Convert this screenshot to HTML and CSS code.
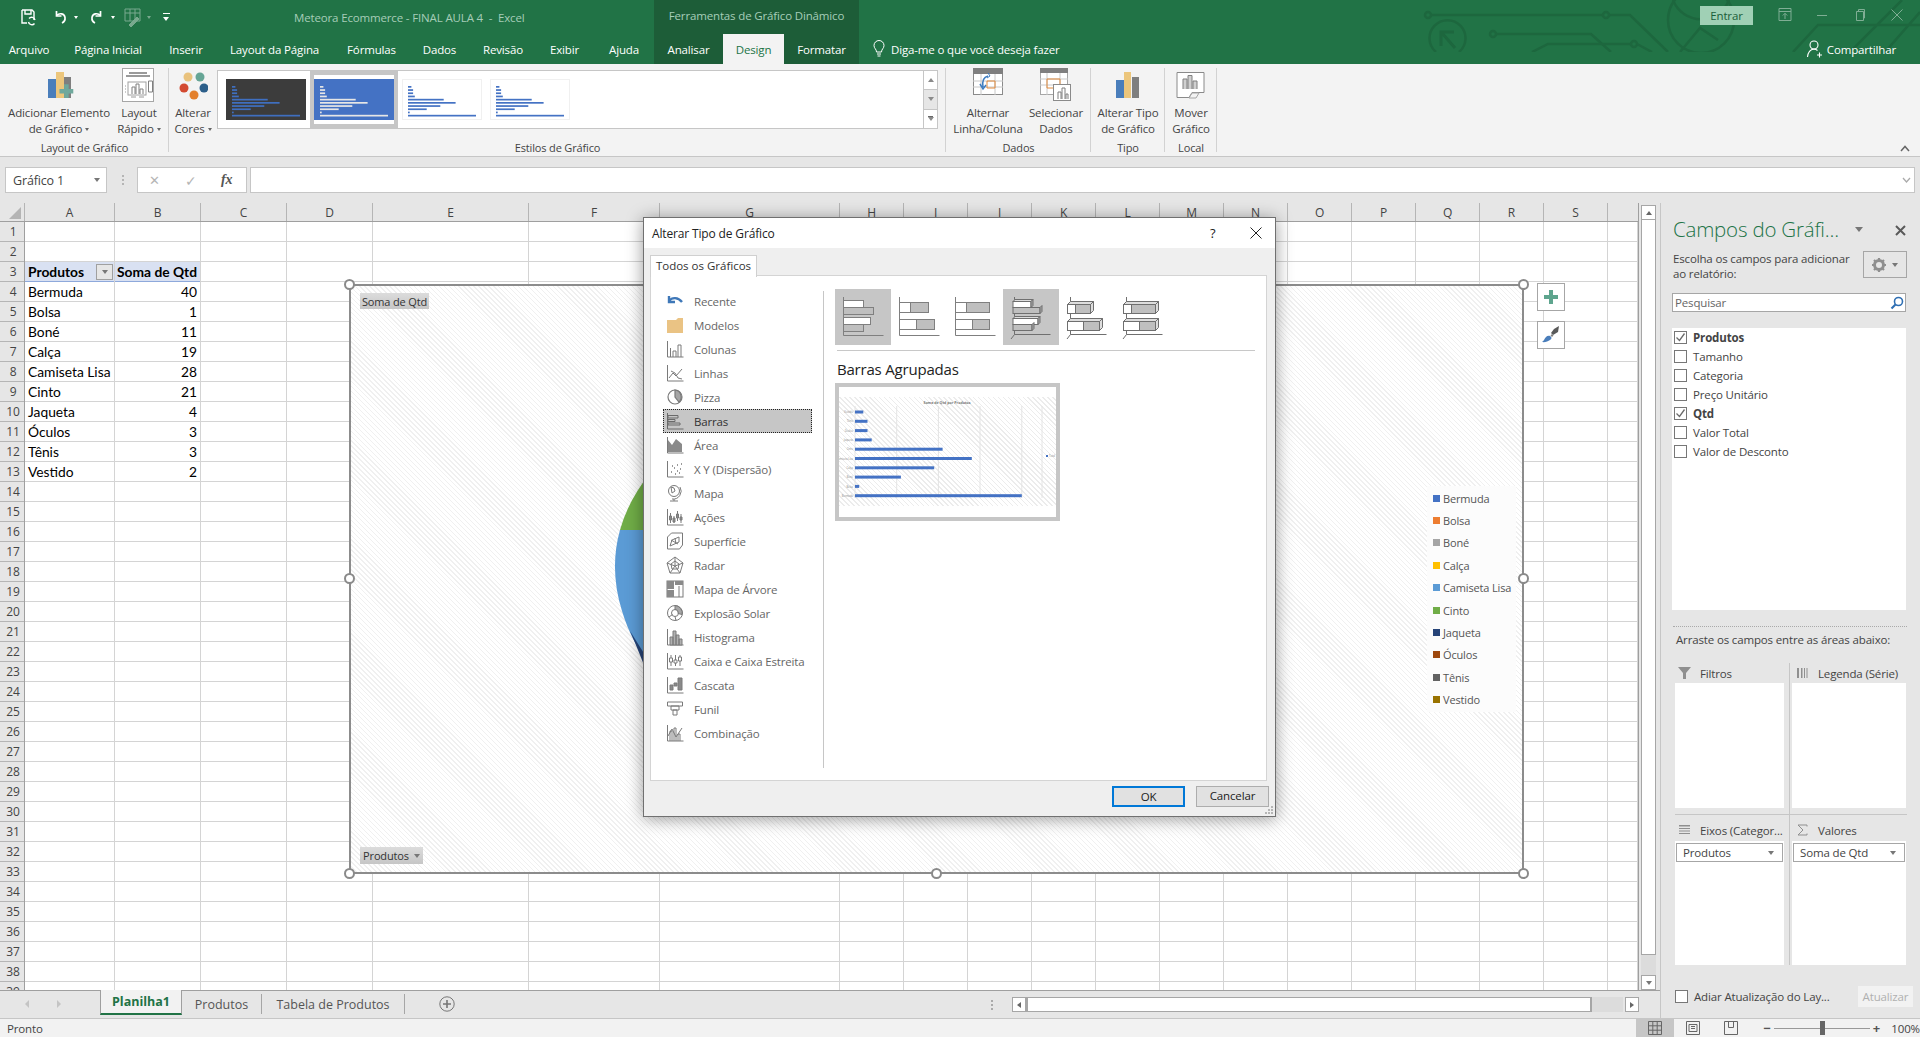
FILE: index.html
```html
<!DOCTYPE html>
<html lang="pt-BR">
<head>
<meta charset="utf-8">
<title>Meteora Ecommerce - FINAL AULA 4 - Excel</title>
<link rel="stylesheet" href="styles.css">
</head>
<body>
<svg class="defs" width="0" height="0">
  <symbol id="thumb-bars" viewBox="0 0 80 41">
    <g fill="currentColor">
      <rect x="6" y="7" width="3.4" height="1.7"/><rect x="6" y="10.2" width="5.1" height="1.7"/><rect x="6" y="13.4" width="5.1" height="1.7"/><rect x="6" y="16.6" width="6.8" height="1.7"/><rect x="6" y="19.8" width="35.7" height="1.7"/><rect x="6" y="23" width="47.6" height="1.7"/><rect x="6" y="26.2" width="32.3" height="1.7"/><rect x="6" y="29.4" width="18.7" height="1.7"/><rect x="6" y="32.6" width="1.7" height="1.7"/><rect x="6" y="35.8" width="68" height="1.7"/>
    </g>
  </symbol>
  <symbol id="gridlet" viewBox="0 0 16 16"><path d="M1.5 1v14h14" fill="none" stroke="#7f7f7f"/></symbol>
</svg>
<div class="app">
  <header class="head">
    <svg class="circuit" width="500" height="52" viewBox="1420 0 500 52" fill="none" stroke="#1d673e" stroke-width="2.5">
      <circle cx="1428" cy="15" r="3"/><path d="M1431 15H1603M1609 15H1630L1668 52"/><circle cx="1606" cy="15" r="3"/>
      <path d="M1436 52A18 18 0 1 1 1459 52"/><path d="M1441 46V32H1454M1442 33L1455 48" stroke-width="3"/>
      <circle cx="1493" cy="34" r="3"/><path d="M1496 34H1591L1611 52"/>
      <path d="M1532 52L1548 44H1631"/><circle cx="1634" cy="44" r="3"/><path d="M1637 44L1652 52"/>
      <path d="M1673 0A30 30 0 0 0 1729 0M1680 52L1700 28L1718 40"/><circle cx="1701" cy="20" r="33"/>
      <path d="M1793 52L1818 25H1920M1850 52L1902 0M1885 52L1920 12"/>
    </svg>
    <div class="title-row">
      <div class="qat">
        <svg class="qat-save" width="18" height="18" viewBox="0 0 18 18" fill="none" stroke="#fff" stroke-width="1.4"><path d="M3 2h10l2 2v8M3 2v13h5"/><path d="M6 2v4h6V2"/><path d="M16 12a3.4 3.4 0 0 0-6-1.5M9.500 14a3.400 3.400 0 0 0 6 1.500"/></svg>
        <svg class="qat-undo" width="16" height="16" viewBox="0 0 16 16" fill="none" stroke="#fff" stroke-width="1.7"><path d="M4.500 2v5h5"/><path d="M4.500 6.500c3-3 8-2 8.500 2 .3 2.500-1 4.500-3 5.500"/></svg>
        <span class="qat-arrow"></span>
        <svg class="qat-redo" width="16" height="16" viewBox="0 0 16 16" fill="none" stroke="#fff" stroke-width="1.7"><path d="M11.500 2v5h-5"/><path d="M11.500 6.500c-3-3-8-2-8.500 2-.3 2.500 1 4.500 3 5.500"/></svg>
        <span class="qat-arrow"></span>
        <svg class="qat-form" width="20" height="20" viewBox="0 0 20 20" fill="none" stroke="#79a98e"><path d="M2 2h15v12H2zM2 6h15M7 2v12M12 2v12"/><path d="M6 18l8-8 2 2-8 8z" fill="#79a98e"/></svg>
        <span class="qat-arrow qat-arrow-dim"></span>
        <span class="qat-custom"></span>
      </div>
      <div class="doc-title">Meteora Ecommerce - FINAL AULA 4&nbsp; -&nbsp; Excel</div>
      <div class="context-title">Ferramentas de Gráfico Dinâmico</div>
      <div class="title-fill"></div>
      <div class="signin">Entrar</div>
      <div class="win-btns">
        <svg width="14" height="14" viewBox="0 0 14 14" fill="none" stroke="#7fae94"><path d="M1 .500h12v12H1zM1 3.500h12M7 11V5.500M4.800 7.500L7 5.300l2.200 2.200"/></svg>
        <svg width="14" height="14" viewBox="0 0 14 14" fill="none" stroke="#7fae94"><path d="M2 7.500h10"/></svg>
        <svg width="14" height="14" viewBox="0 0 14 14" fill="none" stroke="#7fae94"><path d="M3.500 3.500h7v9h-7zM5.500 3.500V1.500h6v8.500h-1"/></svg>
        <svg width="14" height="14" viewBox="0 0 14 14" fill="none" stroke="#7fae94"><path d="M1.500 1.500l11 11M12.500 1.500l-11 11"/></svg>
      </div>
    </div>
    <nav class="tab-row">
      <div class="tab tab-arquivo">Arquivo</div>
      <div class="tab tab-inicial">Página Inicial</div>
      <div class="tab tab-inserir">Inserir</div>
      <div class="tab tab-layout">Layout da Página</div>
      <div class="tab tab-formulas">Fórmulas</div>
      <div class="tab tab-dados">Dados</div>
      <div class="tab tab-revisao">Revisão</div>
      <div class="tab tab-exibir">Exibir</div>
      <div class="tab tab-ajuda">Ajuda</div>
      <div class="context-tabs">
        <div class="tab tab-analisar">Analisar</div>
        <div class="tab tab-design">Design</div>
        <div class="tab tab-formatar">Formatar</div>
      </div>
      <div class="tell-me">
        <svg width="12" height="18" viewBox="0 0 12 18" fill="none" stroke="#fff"><path d="M3.500 12c0-3-2.500-3.500-2.500-6.500a5 5 0 0 1 10 0C11 8.500 8.500 9 8.500 12zM4 14h4M4.500 16h3"/></svg>
        <span>Diga-me o que você deseja fazer</span>
      </div>
      <div class="share">
        <svg width="18" height="18" viewBox="0 0 18 18" fill="none" stroke="#fff" stroke-width="1.1"><circle cx="8" cy="5" r="4"/><path d="M1.500 17c.5-5 3-7.500 6.500-8 1.500.2 2.600.7 3.500 1.500M13.500 12.500v5M11 15h5"/></svg>
        <span>Compartilhar</span>
      </div>
    </nav>
  </header>

  <section class="ribbon">
    <div class="rgroup rgroup-layout">
      <div class="rgroup-body">
        <div class="rbtn rbtn-add">
          <svg class="ricon" width="32" height="36" viewBox="0 0 32 36"><rect x="5" y="11" width="8" height="19" fill="#4a7ebb"/><rect x="13" y="4" width="8" height="26" fill="#ecc67c"/><rect x="21" y="9" width="7" height="21" fill="#7f7f7f"/><path d="M24 21h5v5h5v5h-5v5h-5v-5h-5v-5h5z" transform="translate(-1 -3) scale(.92)" fill="#6fa89c"/></svg>
          <div class="rtext">Adicionar Elemento<br>de Gráfico<i class="caret"></i></div>
        </div>
        <div class="rbtn rbtn-quick">
          <svg class="ricon" width="34" height="36" viewBox="0 0 34 36" fill="none"><rect x=".5" y=".500" width="31" height="33" fill="#fff" stroke="#a6a6a6"/><path d="M7 5h18M4 8h24" stroke="#9a9a9a" stroke-width="2"/><rect x="6" y="14" width="18" height="13" stroke="#a0a0a0"/><path d="M10 26V19h3v7M14 26V16h3v10M18 26V21h3v5" stroke="#7f7f7f"/><path d="M26.500 13h4v11h-4z" stroke="#7f7f7f"/><path d="M9 29h5M17 29h5" stroke="#999"/><path d="M3 18h1M3 21h1M3 24h1" stroke="#999"/></svg>
          <div class="rtext">Layout<br>Rápido<i class="caret"></i></div>
        </div>
      </div>
      <div class="rgroup-label">Layout de Gráfico</div>
    </div>
    <div class="rgroup rgroup-styles">
      <div class="rgroup-body">
        <div class="rbtn rbtn-colors">
          <svg class="ricon" width="30" height="36" viewBox="0 0 30 36"><circle cx="10" cy="9" r="4.500" fill="#e9c27d"/><circle cx="22" cy="9" r="4.500" fill="#66a595"/><circle cx="6" cy="20" r="4.500" fill="#d34a30"/><circle cx="26" cy="20" r="4.500" fill="#2c5f8a"/><circle cx="16" cy="27" r="4.500" fill="#e37f2b"/></svg>
          <div class="rtext">Alterar<br>Cores<i class="caret"></i></div>
        </div>
        <div class="gallery">
          <div class="gal-item gal-dark"><svg width="80" height="41"><use href="#thumb-bars"/></svg></div>
          <div class="gal-item gal-blue"><svg width="80" height="41"><use href="#thumb-bars"/></svg></div>
          <div class="gal-item gal-plain"><svg width="80" height="41"><use href="#thumb-bars"/></svg></div>
          <div class="gal-item gal-plain"><svg width="80" height="41"><use href="#thumb-bars"/></svg></div>
          <div class="gal-scroll">
            <div class="gal-btn"><i class="tri-up"></i></div>
            <div class="gal-btn gal-btn-mid"><i class="tri-down"></i></div>
            <div class="gal-btn gal-btn-more"><i class="tri-down"></i></div>
          </div>
        </div>
      </div>
      <div class="rgroup-label">Estilos de Gráfico</div>
    </div>
    <div class="rgroup rgroup-data">
      <div class="rgroup-body">
        <div class="rbtn rbtn-switch">
          <svg class="ricon" width="30" height="36" viewBox="0 0 30 36" fill="none"><rect x=".5" y=".500" width="29" height="26" fill="#fff" stroke="#8a8a8a"/><rect x="0" y="0" width="30" height="6" fill="#7f7f7f"/><path d="M0 13h30M0 19h30M8 6v21M22 6v21" stroke="#c8c8c8"/><path d="M14 13h8v7h-8z" stroke="#e08a3c"/><path d="M15 8c-4 1-6 5-5 11M7 16l3 5 3-4" stroke="#3d7cc0" stroke-width="1.500"/><path d="M14 10l3-2-2-3" stroke="#3d7cc0"/></svg>
          <div class="rtext">Alternar<br>Linha/Coluna</div>
        </div>
        <div class="rbtn rbtn-select">
          <svg class="ricon" width="32" height="36" viewBox="0 0 32 36" fill="none"><rect x=".5" y=".500" width="27" height="26" fill="#fff" stroke="#a6a6a6"/><rect x="0" y="0" width="28" height="5" fill="#7f7f7f"/><path d="M0 11h28M0 17h28M7 5v22M20 5v22" stroke="#c8c8c8"/><path d="M7 11h13v9H7z" stroke="#e08a3c"/><rect x="13.500" y="16.500" width="17" height="16" fill="#fff" stroke="#8a8a8a"/><path d="M18 31V24h3v7M22 31V20h3v11M26 31V26h2v5" stroke="#7f7f7f"/></svg>
          <div class="rtext">Selecionar<br>Dados</div>
        </div>
      </div>
      <div class="rgroup-label">Dados</div>
    </div>
    <div class="rgroup rgroup-type">
      <div class="rgroup-body">
        <div class="rbtn rbtn-type">
          <svg class="ricon" width="24" height="36" viewBox="0 0 24 36"><rect x="0" y="12" width="8" height="18" fill="#4a7ebb"/><rect x="8" y="4" width="7" height="26" fill="#ecc67c"/><rect x="16" y="9" width="7" height="21" fill="#7f7f7f"/></svg>
          <div class="rtext">Alterar Tipo<br>de Gráfico</div>
        </div>
      </div>
      <div class="rgroup-label">Tipo</div>
    </div>
    <div class="rgroup rgroup-local">
      <div class="rgroup-body">
        <div class="rbtn rbtn-move">
          <svg class="ricon" width="30" height="36" viewBox="0 0 30 36" fill="none"><path d="M1 4.500h27v20H16l-3 5H1z" fill="#fff" stroke="#8a8a8a"/><path d="M7 21V11h4v10M12 21V7.500h4V21M17 21V13h4v8" fill="#d0d0d0" stroke="#7f7f7f"/><path d="M13 30l3-5h7l-3 5z" stroke="#a6a6a6"/></svg>
          <div class="rtext">Mover<br>Gráfico</div>
        </div>
      </div>
      <div class="rgroup-label">Local</div>
    </div>
    <div class="ribbon-collapse"><svg width="10" height="7" viewBox="0 0 10 7" fill="none" stroke="#666" stroke-width="1.500"><path d="M1 6l4-4.500L9 6"/></svg></div>
  </section>

  <section class="formula-bar">
    <div class="name-box"><span>Gráfico 1</span><i class="tri-down tri-dark"></i></div>
    <div class="fb-dots"></div>
    <div class="fb-tools">
      <span class="fb-x">✕</span><span class="fb-ok">✓</span><span class="fb-fx">fx</span>
    </div>
    <div class="fb-input"><svg width="9" height="6" viewBox="0 0 9 6" fill="none" stroke="#aaa" stroke-width="1.300"><path d="M1 1l3.500 4L8 1"/></svg></div>
  </section>

  <main class="work">
    <div class="work-left">
      <div class="sheet-row">
        <div class="sheet">
          <div class="col-heads">
            <div class="corner"><i></i></div>
            <div class="ch c-a">A</div><div class="ch c-b">B</div><div class="ch c-c">C</div><div class="ch c-c">D</div><div class="ch c-e">E</div><div class="ch c-f">F</div><div class="ch c-g">G</div><div class="ch c-n">H</div><div class="ch c-n">I</div><div class="ch c-n">J</div><div class="ch c-n">K</div><div class="ch c-n">L</div><div class="ch c-n">M</div><div class="ch c-n">N</div><div class="ch c-n">O</div><div class="ch c-n">P</div><div class="ch c-n">Q</div><div class="ch c-n">R</div><div class="ch c-n">S</div><div class="ch c-t"></div>
          </div>
          <div class="sheet-body">
            <div class="row-heads">
              <div>1</div><div>2</div><div>3</div><div>4</div><div>5</div><div>6</div><div>7</div><div>8</div><div>9</div><div>10</div><div>11</div><div>12</div><div>13</div><div>14</div><div>15</div><div>16</div><div>17</div><div>18</div><div>19</div><div>20</div><div>21</div><div>22</div><div>23</div><div>24</div><div>25</div><div>26</div><div>27</div><div>28</div><div>29</div><div>30</div><div>31</div><div>32</div><div>33</div><div>34</div><div>35</div><div>36</div><div>37</div><div>38</div><div>39</div>
            </div>
            <div class="col c-a">
              <div class="cell"></div><div class="cell"></div>
              <div class="cell cell-head">Produtos<i class="filter-btn"><b class="tri-down tri-dark"></b></i></div>
              <div class="cell">Bermuda</div><div class="cell">Bolsa</div><div class="cell">Boné</div><div class="cell">Calça</div><div class="cell">Camiseta Lisa</div><div class="cell">Cinto</div><div class="cell">Jaqueta</div><div class="cell">Óculos</div><div class="cell">Tênis</div><div class="cell">Vestido</div>
            </div>
            <div class="col c-b">
              <div class="cell"></div><div class="cell"></div>
              <div class="cell cell-head cell-head-b">Soma de Qtd</div>
              <div class="cell num">40</div><div class="cell num">1</div><div class="cell num">11</div><div class="cell num">19</div><div class="cell num">28</div><div class="cell num">21</div><div class="cell num">4</div><div class="cell num">3</div><div class="cell num">3</div><div class="cell num">2</div>
            </div>
            <div class="col c-c"></div><div class="col c-c"></div><div class="col c-e"></div><div class="col c-f"></div><div class="col c-g"></div>
            <div class="col c-n"></div><div class="col c-n"></div><div class="col c-n"></div><div class="col c-n"></div><div class="col c-n"></div><div class="col c-n"></div><div class="col c-n"></div><div class="col c-n"></div><div class="col c-n"></div><div class="col c-n"></div><div class="col c-n"></div><div class="col c-n"></div>
            <div class="col c-t"></div>
          </div>

          <div class="chart">
            <svg class="pie" width="60" height="220" viewBox="610 470 60 220">
              <path d="M620 531Q628 502 650 474V531Z" fill="#70ad47"/>
              <path d="M620 531Q609 570 622 612Q632 645 650 664V531Z" fill="#5b9bd5"/>
              <path d="M630 632Q640 655 650 682V664Z" fill="#264478"/>
            </svg>
            <div class="chart-btn chart-btn-value">Soma de Qtd</div>
            <div class="chart-btn chart-btn-axis">Produtos<i class="tri-down tri-dark"></i></div>
            <ul class="legend">
              <li><i class="sw sw1"></i>Bermuda</li><li><i class="sw sw2"></i>Bolsa</li><li><i class="sw sw3"></i>Boné</li><li><i class="sw sw4"></i>Calça</li><li><i class="sw sw5"></i>Camiseta Lisa</li><li><i class="sw sw6"></i>Cinto</li><li><i class="sw sw7"></i>Jaqueta</li><li><i class="sw sw8"></i>Óculos</li><li><i class="sw sw9"></i>Tênis</li><li><i class="sw sw10"></i>Vestido</li>
            </ul>
            <i class="handle h-tl"></i><i class="handle h-tr"></i><i class="handle h-ml"></i><i class="handle h-mr"></i><i class="handle h-bl"></i><i class="handle h-bm"></i><i class="handle h-br"></i>
          </div>
          <div class="chart-tool chart-tool-plus"><svg width="16" height="16" viewBox="0 0 16 16"><path d="M6 1h4v5h5v4h-5v5H6v-5H1V6h5z" fill="#5ea58e"/></svg></div>
          <div class="chart-tool chart-tool-brush"><svg width="20" height="20" viewBox="0 0 20 20"><path d="M18 1l-1 6-5 3-2-2 3-4z" fill="#595959"/><path d="M11 9l1.500 1.500-1.500 1.500-1.500-1.500z" fill="#7f7f7f"/><path d="M9 11c2 1 2 3 0 4-2 1.500-5 2.500-8 2 2-1 2-3 4-5 1-1 2.500-1.500 4-1z" fill="#4a7ebb"/></svg></div>
        </div>
        <div class="vscroll">
          <div class="sb-btn"><i class="tri-up tri-dark"></i></div>
          <div class="sb-thumb"></div>
          <div class="sb-track"></div>
          <div class="sb-btn"><i class="tri-down tri-dark"></i></div>
        </div>
      </div>
      <div class="sheet-tabs">
        <div class="sheet-nav"><svg width="40" height="10" viewBox="0 0 40 10" fill="#c4c4c4"><path d="M5 1L1 5l4 4zM33 1l4 4-4 4z"/></svg></div>
        <div class="stab stab-active">Planilha1</div>
        <div class="stab stab-prod">Produtos</div>
        <div class="stab stab-tab">Tabela de Produtos</div>
        <div class="stab-add"><svg width="16" height="16" viewBox="0 0 16 16" fill="none" stroke="#777"><circle cx="8" cy="8" r="7.200"/><path d="M8 4v8M4 8h8" stroke-width="1.600"/></svg></div>
        <div class="tabs-fill"><span class="tabs-grip"></span></div>
        <div class="hscroll">
          <div class="hsb-btn"><i class="tri-left"></i></div>
          <div class="hsb-thumb"></div>
          <div class="hsb-track"></div>
          <div class="hsb-btn"><i class="tri-right"></i></div>
        </div>
      </div>
    </div>

    <aside class="pane">
      <div class="pane-head">
        <div class="pane-title">Campos do Gráfi...</div>
        <i class="pane-menu"></i>
        <svg class="pane-close" width="11" height="11" viewBox="0 0 11 11" stroke="#595959" stroke-width="2"><path d="M1 1l9 9M10 1l-9 9"/></svg>
      </div>
      <div class="pane-desc">
        <p>Escolha os campos para adicionar<br>ao relatório:</p>
        <div class="gear-box"><svg width="14" height="14" viewBox="0 0 14 14"><path d="M5.500 0h3l.4 2 1.700.7 1.700-1.100 2 2-1.100 1.800.7 1.600 2 .4v3" fill="none"/><circle cx="7" cy="7" r="4.500" fill="none" stroke="#8f8f8f" stroke-width="3"/><path d="M7 0v3M7 11v3M0 7h3M11 7h3M2 2l2 2M10 10l2 2M12 2l-2 2M4 10l-2 2" stroke="#8f8f8f" stroke-width="2.200"/></svg><i class="tri-down tri-dark"></i></div>
      </div>
      <div class="pane-search"><span>Pesquisar</span><svg width="14" height="14" viewBox="0 0 14 14" fill="none" stroke="#2f6fb3" stroke-width="1.600"><circle cx="8.500" cy="5.500" r="4"/><path d="M5.500 8.500L1.500 12.500" stroke-width="2.200"/></svg></div>
      <ul class="field-list">
        <li class="on"><i class="chk"><svg width="11" height="11" viewBox="0 0 11 11" fill="none" stroke="#6b6b6b" stroke-width="1.300"><path d="M1.500 5.500l3 3 5-7"/></svg></i>Produtos</li>
        <li><i class="chk"></i>Tamanho</li>
        <li><i class="chk"></i>Categoria</li>
        <li><i class="chk"></i>Preço Unitário</li>
        <li class="on"><i class="chk"><svg width="11" height="11" viewBox="0 0 11 11" fill="none" stroke="#6b6b6b" stroke-width="1.300"><path d="M1.500 5.500l3 3 5-7"/></svg></i>Qtd</li>
        <li><i class="chk"></i>Valor Total</li>
        <li><i class="chk"></i>Valor de Desconto</li>
      </ul>
      <div class="pane-dots"></div>
      <div class="pane-drag">Arraste os campos entre as áreas abaixo:</div>
      <div class="areas">
        <div class="area area-tl">
          <div class="area-head"><svg width="14" height="12" viewBox="0 0 14 12" fill="#8f8f8f"><path d="M0 0h13L8 6v6H5V6z"/></svg>Filtros</div>
          <div class="area-box"></div>
        </div>
        <div class="area area-tr">
          <div class="area-head"><svg width="14" height="12" viewBox="0 0 14 12" fill="#8f8f8f"><path d="M1 1h2v10H1zM5 1h1.500v10H5zM8 1h1v10H8zM10.500 1h1v10h-1z"/></svg>Legenda (Série)</div>
          <div class="area-box"></div>
        </div>
        <div class="area area-bl">
          <div class="area-head"><svg width="14" height="12" viewBox="0 0 14 12" fill="#8f8f8f"><path d="M1 1h11v1.500H1zM1 4h11v1H1zM1 6.500h11v1H1zM1 9h11v1H1z"/></svg>Eixos (Categor...</div>
          <div class="area-box"><div class="field-pill">Produtos<i class="tri-down tri-dark"></i></div></div>
        </div>
        <div class="area area-br">
          <div class="area-head"><svg width="14" height="12" viewBox="0 0 14 12" fill="none" stroke="#8f8f8f"><path d="M11 2.500V1H2l5 5-5 5h9V9.500"/></svg>Valores</div>
          <div class="area-box"><div class="field-pill">Soma de Qtd<i class="tri-down tri-dark"></i></div></div>
        </div>
      </div>
      <div class="pane-foot">
        <i class="chk"></i><span>Adiar Atualização do Lay...</span>
        <div class="update-btn">Atualizar</div>
      </div>
    </aside>
  </main>

  <footer class="status">
    <span class="status-ready">Pronto</span>
    <div class="status-views">
      <div class="view-btn view-on"><svg width="14" height="14" viewBox="0 0 14 14" fill="none" stroke="#666"><path d="M.5.500h13v13H.5zM.5 4.800h13M.5 9.200h13M4.800.500v13M9.200.500v13"/></svg></div>
      <div class="view-btn"><svg width="14" height="14" viewBox="0 0 14 14" fill="none" stroke="#666"><path d="M.5.500h13v13H.5zM3 3.500h8v7H3zM5 5.500h4M5 7.500h4"/></svg></div>
      <div class="view-btn"><svg width="14" height="14" viewBox="0 0 14 14" fill="none" stroke="#666"><path d="M.5.500h13v13H.5zM4.500.500v6h5v-6"/></svg></div>
    </div>
    <div class="zoom">
      <span class="z-sign">−</span>
      <div class="z-track"><i></i></div>
      <span class="z-sign">+</span>
      <span class="z-val">100%</span>
    </div>
  </footer>

  <div class="dialog">
    <div class="dlg-title"><span>Alterar Tipo de Gráfico</span><b class="dlg-help">?</b><svg class="dlg-x" width="12" height="12" viewBox="0 0 12 12" stroke="#222" fill="none"><path d="M.5.500l11 11M11.500.500l-11 11"/></svg></div>
    <div class="dlg-tabs"><div class="dlg-tab">Todos os Gráficos</div></div>
    <div class="dlg-panel">
      <ul class="types">
        <li class="t-first"><svg viewBox="0 0 18 18" width="18" height="18" fill="none" stroke="#3f78b8" stroke-width="2.400"><path d="M3 4v6h6"/><path d="M3 9c3-4 9-4 13 1"/></svg>Recente</li>
        <li><svg viewBox="0 0 18 18" width="18" height="18"><path d="M1 4h9l2-2h5v15H1z" fill="#eac384"/></svg>Modelos</li>
        <li><svg viewBox="0 0 18 18" width="18" height="18" fill="none" stroke="#7a7a7a"><path d="M1.500 1v16h16M4.500 17V8M7 17V11h3v6M12 17V5h3v12"/></svg>Colunas</li>
        <li><svg viewBox="0 0 18 18" width="18" height="18" fill="none" stroke="#7a7a7a"><path d="M1.500 1v16h16"/><path d="M3 14l4-5 3 3 6-7M5 7l4 2 3 5 4 1"/></svg>Linhas</li>
        <li><svg viewBox="0 0 18 18" width="18" height="18" fill="none" stroke="#7a7a7a" stroke-width="1.200"><circle cx="9" cy="9" r="7"/><path d="M9 2v7l4 5A7 7 0 0 0 9 2z" fill="#a6a6a6"/></svg>Pizza</li>
        <li class="t-sel"><svg viewBox="0 0 18 18" width="18" height="18" fill="none" stroke="#6a6a6a"><path d="M1.500 1v16h16M2 3.500h10v2.500H2zM2 7.500h7v2H2zM2 11h12v2H2z"/></svg>Barras</li>
        <li><svg viewBox="0 0 18 18" width="18" height="18"><path d="M1.500 1v16h16" fill="none" stroke="#7a7a7a"/><path d="M2 4l4 5 4-6 6 5v8H2z" fill="#8a8a8a"/></svg>Área</li>
        <li><svg viewBox="0 0 18 18" width="18" height="18" fill="none" stroke="#7a7a7a"><path d="M1.500 1v16h16"/><path d="M5 12h1M8 8h1M11 5h1M14 9h1M6 6h1M11 11h1M9 14h1M15 4h1M13 13h1" stroke-width="1.600"/></svg>X Y (Dispersão)</li>
        <li><svg viewBox="0 0 18 18" width="18" height="18" fill="none" stroke="#7a7a7a"><circle cx="8" cy="7" r="5.500"/><path d="M5 3l3 1 1 3-3 2zM14 3a8 8 0 0 1-8 12M8 15v2M4 17h8"/></svg>Mapa</li>
        <li><svg viewBox="0 0 18 18" width="18" height="18" fill="none" stroke="#7a7a7a"><path d="M1.500 1v16h16M4.500 5v10M8 8v7M11.500 3v10M15 6v9"/><path d="M3.500 8h2v4h-2zM7 10h2v4H7zM10.500 6h2v4h-2zM14 9h2v3h-2z" fill="#8a8a8a"/></svg>Ações</li>
        <li><svg viewBox="0 0 18 18" width="18" height="18" fill="none" stroke="#7a7a7a"><path d="M1.500 5v12h12l3-4V1h-11z"/><path d="M4 14l2-6 7-3v5zM5 8l7 4M9 6l1 6"/></svg>Superfície</li>
        <li><svg viewBox="0 0 18 18" width="18" height="18" fill="none" stroke="#7a7a7a"><path d="M9 1l8 6-3 10H4L1 7zM9 1v9M1 7l8 3 8-3M4 17l5-7 5 7"/><path d="M9 5l4 3-1 5H6L5 8z"/></svg>Radar</li>
        <li><svg viewBox="0 0 18 18" width="18" height="18"><rect x="1" y="1" width="16" height="16" fill="#fff" stroke="#7a7a7a"/><rect x="1" y="1" width="7" height="8" fill="#8a8a8a"/><rect x="1" y="10" width="7" height="7" fill="#8a8a8a"/><rect x="9" y="1" width="8" height="4" fill="#8a8a8a"/><path d="M13 6v11" stroke="#7a7a7a"/></svg>Mapa de Árvore</li>
        <li><svg viewBox="0 0 18 18" width="18" height="18" fill="none" stroke="#7a7a7a"><circle cx="9" cy="9" r="7.500"/><circle cx="9" cy="9" r="3.500"/><path d="M9 1.500a7.500 7.500 0 0 1 7 9L12 9.500A3 3 0 0 0 9 5.500z" fill="#a6a6a6"/><path d="M3 13l3.500-2.500M9 12.500l1 4"/></svg>Explosão Solar</li>
        <li><svg viewBox="0 0 18 18" width="18" height="18" fill="none" stroke="#7a7a7a"><path d="M1.500 1v16h16"/><path d="M4 17V9h3v8zM7 17V3h3v14zM10 17V7h3v10zM13 17v-6h3v6z" fill="#b0b0b0"/></svg>Histograma</li>
        <li><svg viewBox="0 0 18 18" width="18" height="18" fill="none" stroke="#7a7a7a"><path d="M1.500 1v16h16M5 3v11M9.500 3v11M14 3v11"/><path d="M3.500 6h3v4h-3zM8 8h3v3H8zM12.500 5h3v4h-3z" fill="#fff"/></svg>Caixa e Caixa Estreita</li>
        <li><svg viewBox="0 0 18 18" width="18" height="18" fill="none" stroke="#7a7a7a"><path d="M1.500 1v16h16"/><path d="M4 9h3v5H4zM8 7h3v3H8zM12 2h4v12h-4z" fill="#8a8a8a"/></svg>Cascata</li>
        <li><svg viewBox="0 0 18 18" width="18" height="18" fill="none" stroke="#7a7a7a"><path d="M1.500 2h15v4h-15zM5 6h8v4H5zM7 10h4v5H7z"/></svg>Funil</li>
        <li><svg viewBox="0 0 18 18" width="18" height="18" fill="none" stroke="#7a7a7a"><path d="M1.500 1v16h16M4 17V7h2v10M8 17V4h2v13M12 17v-7h2v7"/><path d="M2 12l4-7 4 8 6-9"/></svg>Combinação</li>
      </ul>
      <div class="dlg-main">
        <div class="subtypes">
          <div class="sub sub-sel"><svg width="56" height="56" viewBox="0 0 56 56" fill="#fff" stroke="#7f7f7f"><path d="M8.500 8v38.500h40" fill="none"/><rect x="8.500" y="11.500" width="20" height="7"/><rect x="8.500" y="18.500" width="30" height="7" fill="#bfbfbf"/><rect x="8.500" y="28.500" width="27" height="7"/><rect x="8.500" y="35.500" width="20" height="7" fill="#bfbfbf"/></svg></div>
          <div class="sub"><svg width="56" height="56" viewBox="0 0 56 56" fill="#fff" stroke="#7f7f7f"><path d="M8.500 8v38.500h40" fill="none"/><rect x="8.500" y="13.500" width="11" height="10"/><rect x="19.500" y="13.500" width="18" height="10" fill="#bfbfbf"/><rect x="8.500" y="30.500" width="17" height="10"/><rect x="25.500" y="30.500" width="18" height="10" fill="#bfbfbf"/></svg></div>
          <div class="sub"><svg width="56" height="56" viewBox="0 0 56 56" fill="#fff" stroke="#7f7f7f"><path d="M8.500 8v38.500h40" fill="none"/><rect x="8.500" y="13.500" width="11" height="10"/><rect x="19.500" y="13.500" width="23" height="10" fill="#bfbfbf"/><rect x="8.500" y="30.500" width="17" height="10"/><rect x="25.500" y="30.500" width="17" height="10" fill="#bfbfbf"/></svg></div>
          <div class="sub sub-sel"><svg width="56" height="56" viewBox="0 0 56 56" fill="#fff" stroke="#6f6f6f"><path d="M11.500 8v37.500h36M11.500 45.500L8 50" fill="none"/><path d="M10 12.500h18l2-2H12z" fill="#dedede"/><rect x="10" y="12.500" width="18" height="6"/><path d="M28 12.500l2-2v6l-2 2z" fill="#a6a6a6"/><rect x="10" y="18.500" width="27" height="6" fill="#bfbfbf"/><path d="M37 18.500l2-2v6l-2 2z" fill="#a6a6a6"/><path d="M10 29.500h25l2-2H12z" fill="#dedede"/><rect x="10" y="29.500" width="25" height="6"/><path d="M35 29.500l2-2v6l-2 2z" fill="#a6a6a6"/><rect x="10" y="35.500" width="19" height="6" fill="#bfbfbf"/><path d="M29 35.500l2-2v6l-2 2z" fill="#a6a6a6"/></svg></div>
          <div class="sub"><svg width="56" height="56" viewBox="0 0 56 56" fill="#fff" stroke="#6f6f6f"><path d="M11.500 8v37.500h36M11.500 45.500L8 50" fill="none"/><rect x="8.500" y="15.500" width="8" height="9"/><rect x="16.500" y="15.500" width="15" height="9" fill="#bfbfbf"/><path d="M8.500 15.500l3-3h23l-3 3zM31.500 15.500l3-3v9l-3 3z" fill="#dedede"/><rect x="8.500" y="32.500" width="16" height="9"/><rect x="24.500" y="32.500" width="16" height="9" fill="#bfbfbf"/><path d="M8.500 32.500l3-3h32l-3 3zM40.500 32.500l3-3v9l-3 3z" fill="#dedede"/></svg></div>
          <div class="sub"><svg width="56" height="56" viewBox="0 0 56 56" fill="#fff" stroke="#6f6f6f"><path d="M11.500 8v37.500h36M11.500 45.500L8 50" fill="none"/><rect x="8.500" y="15.500" width="8" height="9"/><rect x="16.500" y="15.500" width="24" height="9" fill="#bfbfbf"/><path d="M8.500 15.500l3-3h32l-3 3zM40.500 15.500l3-3v9l-3 3z" fill="#dedede"/><rect x="8.500" y="32.500" width="16" height="9"/><rect x="24.500" y="32.500" width="16" height="9" fill="#bfbfbf"/><path d="M8.500 32.500l3-3h32l-3 3zM40.500 32.500l3-3v9l-3 3z" fill="#dedede"/></svg></div>
        </div>
        <div class="sub-rule"></div>
        <div class="sub-name">Barras Agrupadas</div>
        <div class="preview">
          <svg width="217" height="109" viewBox="0 0 217 109" class="preview-svg">
            <text x="108" y="7" class="pv-title" text-anchor="middle">Soma de Qtd por Produtos</text>
            <path d="M16 9v92M57.700 9v92M99.400 9v92M141 9v92M182.800 9v92M203 9v92" stroke="#e4e4e4" fill="none"/>
            <g fill="#4472c4">
              <rect x="16" y="13.500" width="8.300" height="3"/><rect x="16" y="22.800" width="12.500" height="3"/><rect x="16" y="32.100" width="12.500" height="3"/><rect x="16" y="41.400" width="16.700" height="3"/><rect x="16" y="50.700" width="87.600" height="3"/><rect x="16" y="60" width="116.800" height="3"/><rect x="16" y="69.300" width="79.200" height="3"/><rect x="16" y="78.600" width="45.900" height="3"/><rect x="16" y="87.900" width="4.200" height="3"/><rect x="16" y="97.200" width="166.800" height="3"/>
            </g>
            <g class="pv-label" text-anchor="end">
              <text x="14" y="16">Vestido</text><text x="14" y="25">Tênis</text><text x="14" y="34.500">Óculos</text><text x="14" y="44">Jaqueta</text><text x="14" y="53">Cinto</text><text x="14" y="62.500">Camiseta Lisa</text><text x="14" y="72">Calça</text><text x="14" y="81">Boné</text><text x="14" y="90.500">Bolsa</text><text x="14" y="99.500">Bermuda</text>
            </g>
            <rect x="207" y="58" width="2" height="2" fill="#4472c4"/><text x="210" y="60" class="pv-label">Total</text>
          </svg>
        </div>
      </div>
    </div>
    <div class="dlg-foot">
      <div class="dlg-btn dlg-ok">OK</div>
      <div class="dlg-btn">Cancelar</div>
      <svg class="dlg-grip" width="10" height="10" viewBox="0 0 10 10" fill="#b5b5b5"><path d="M7 1h2v2H7zM4 4h2v2H4zM7 4h2v2H7zM1 7h2v2H1zM4 7h2v2H4zM7 7h2v2H7z"/></svg>
    </div>
  </div>
</div>
</body>
</html>
```
FILE: styles.css
```css
* { box-sizing: border-box; }
html, body { margin: 0; padding: 0; background: #e6e6e6; }
ul { list-style: none; margin: 0; padding: 0; }
p { margin: 0; }
i { font-style: normal; display: block; }
svg { display: block; flex: none; }
.defs { position: absolute; }

.app {
  width: 1920px; height: 1037px; position: relative; overflow: hidden;
  font-family: "Open Sans", "Noto Sans", "Liberation Sans", sans-serif;
  font-size: 11.5px; color: #444; letter-spacing: -.15px;
  display: flex; flex-direction: column;
}

/* header */
.head { height: 64px; flex: none; background: #217346; position: relative; color: #fff; }
.circuit { position: absolute; left: 1420px; top: 0; }
.title-row { height: 34px; display: flex; align-items: center; position: relative; }
.qat { width: 294px; height: 34px; display: flex; align-items: center; padding-left: 19px; }
.qat-undo { margin-left: 15px; }
.qat-arrow { width: 0; height: 0; border: 2.5px solid transparent; border-top: 3px solid #fff; margin: 3px 6px 0 6px; }
.qat-redo { margin-left: 5px; }
.qat-form { margin-left: 2px; }
.qat-arrow-dim { border-top-color: #79a98e; margin-left: 4px; }
.qat-custom { width: 7px; height: 8px; margin-left: 6px; border-top: 1px solid #fff; position: relative; }
.qat-custom::after { content: ""; position: absolute; left: 0; top: 3px; border: 3px solid transparent; border-top: 4px solid #fff; border-bottom: 0; }
.doc-title { width: 360px; color: #a6cdb8; font-size: 11.5px; }
.context-title { width: 205px; height: 34px; line-height: 32px; background: #1d5d38; text-align: center; color: #a6cdb8; font-size: 11.5px; }
.title-fill { flex: 1; }
.signin { width: 53px; height: 19px; line-height: 19px; text-align: center; background: #a0d0b5; color: #1b5e3a; margin-top: -4px; margin-right: 25px; font-size: 11.5px; }
.win-btns { width: 142px; display: flex; justify-content: space-between; padding-right: 16px; margin-top: -4px; }
.tab-row { height: 30px; display: flex; position: relative; align-items: stretch; }
.tab { display: flex; align-items: center; justify-content: center; font-size: 11.5px; }
.tab-arquivo { width: 58px; } .tab-inicial { width: 100px; } .tab-inserir { width: 56px; } .tab-layout { width: 121px; }
.tab-formulas { width: 73px; } .tab-dados { width: 63px; } .tab-revisao { width: 64px; } .tab-exibir { width: 59px; } .tab-ajuda { width: 60px; }
.context-tabs { width: 205px; display: flex; background: #1d5d38; }
.tab-analisar { width: 69px; } .tab-design { width: 61px; background: #f3f3f3; color: #217346; } .tab-formatar { width: 75px; }
.tell-me { margin-left: 14px; display: flex; align-items: center; gap: 6px; font-size: 11.5px; }
.share { margin-left: auto; margin-right: 24px; display: flex; align-items: center; gap: 3px; font-size: 11.5px; }

/* ribbon */
.ribbon { height: 93px; flex: none; background: #f3f3f3; border-bottom: 1px solid #c6c6c6; display: flex; position: relative; color: #444; }
.rgroup { height: 92px; display: flex; flex-direction: column; position: relative; padding-top: 4px; }
.rgroup::after { content: ""; position: absolute; right: 0; top: 4px; bottom: 4px; width: 1px; background: #d2d2d2; }
.rgroup-body { height: 72px; display: flex; }
.rgroup-label { height: 16px; line-height: 16px; text-align: center; font-size: 11px; margin-top: 0; }
.rgroup-layout { width: 169px; } .rgroup-styles { width: 777px; } .rgroup-data { width: 145px; } .rgroup-type { width: 74px; } .rgroup-local { width: 52px; }
.rbtn { display: flex; flex-direction: column; align-items: center; }
.ricon { height: 36px; margin-bottom: 1px; }
.rtext { text-align: center; line-height: 16px; font-size: 11.5px; white-space: nowrap; }
.caret { display: inline-block; width: 0; height: 0; border: 2.5px solid transparent; border-top: 3px solid #666; border-bottom: 0; margin-left: 3px; vertical-align: 2px; }
.rbtn-add { width: 114px; margin-left: 2px; } .rbtn-quick { width: 46px; margin-left: 0; }
.rbtn-colors { width: 44px; margin-left: 2px; }
.rbtn-switch { width: 78px; margin-left: 3px; } .rbtn-select { width: 58px; margin-left: 0; }
.rbtn-type { width: 74px; } .rbtn-move { width: 52px; }
.gallery { width: 721px; height: 59px; margin-left: 2px; margin-top: 2px; background: #fff; border: 1px solid #c6c6c6; display: flex; align-items: center; padding-left: 4px; gap: 0; position: relative; }
.gal-item { width: 88px; height: 57px; display: flex; align-items: center; justify-content: center; border: 4px solid transparent; }
.gal-dark svg { background: #3c3c3c; color: #3f6fc0; }
.gal-blue { border-color: #c6c6c6; }
.gal-blue svg { background: #4472c4; color: #e6e6e6; }
.gal-plain svg { background: #fff; color: #4472c4; box-shadow: inset 0 0 0 1px #f0f0f0; }
.gal-scroll { position: absolute; right: 0; top: 0; bottom: 0; width: 14px; display: flex; flex-direction: column; border-left: 1px solid #c6c6c6; }
.gal-btn { flex: 1; display: flex; align-items: center; justify-content: center; background: #fff; }
.gal-btn-mid { background: #e6e6e6; border-top: 1px solid #c6c6c6; border-bottom: 1px solid #c6c6c6; }
.gal-btn-more { position: relative; }
.gal-btn-more::before { content: ""; position: absolute; left: 4px; right: 4px; top: 6px; height: 1px; background: #666; }
.tri-up, .tri-down, .tri-left, .tri-right { width: 0; height: 0; border: 3px solid transparent; flex: none; }
.tri-up { border-top: 0; border-bottom: 4px solid #8a8a8a; }
.tri-down { border-bottom: 0; border-top: 4px solid #8a8a8a; }
.tri-left { border-left: 0; border-right: 4px solid #666; }
.tri-right { border-right: 0; border-left: 4px solid #666; }
.tri-dark.tri-up { border-bottom-color: #666; }
.tri-dark.tri-down { border-top-color: #777; }
.ribbon-collapse { position: absolute; right: 10px; top: 81px; }

/* formula bar */
.formula-bar { height: 46px; flex: none; background: #e6e6e6; display: flex; padding: 10px 5px 0 5px; }
.name-box { width: 102px; height: 26px; background: #fff; border: 1px solid #c6c6c6; display: flex; align-items: center; justify-content: space-between; padding: 0 6px 0 7px; color: #444; font-size: 12.5px; }
.fb-dots { width: 30px; position: relative; }
.fb-dots::after { content: ""; position: absolute; left: 15px; top: 8px; width: 2px; height: 10px; background: repeating-linear-gradient(to bottom, #b5b5b5 0 2px, transparent 2px 4px); }
.fb-tools { width: 110px; height: 26px; background: #fff; border: 1px solid #c6c6c6; display: flex; align-items: center; color: #b5b5b5; }
.fb-x { margin-left: 11px; font-size: 13px; width: 36px; }
.fb-ok { font-size: 14px; width: 36px; }
.fb-fx { font-family: "Liberation Serif", serif; font-style: italic; color: #555; font-size: 14px; font-weight: bold; }
.fb-input { flex: 1; height: 26px; margin-left: 3px; background: #fff; border: 1px solid #c6c6c6; display: flex; align-items: center; justify-content: flex-end; padding-right: 3px; }

/* workspace */
.work { flex: 1; display: flex; min-height: 0; }
.work-left { width: 1660px; display: flex; flex-direction: column; }
.sheet-row { height: 787px; display: flex; }
.sheet { width: 1639px; height: 787px; position: relative; background: #fff; border-right: 1px solid #9f9f9f; overflow: hidden; }
.col-heads { height: 19px; display: flex; background: #e6e6e6; border-bottom: 1px solid #9f9f9f; }
.corner { width: 25px; border-right: 1px solid #b5b5b5; position: relative; }
.corner i { position: absolute; right: 3px; bottom: 2px; border-style: solid; border-width: 0 0 12px 12px; border-color: transparent transparent #b4b4b4 transparent; }
.ch { display: flex; align-items: center; justify-content: center; border-right: 1px solid #b5b5b5; font-size: 12px; color: #444; }
.c-a { width: 90px; } .c-b { width: 86px; } .c-c { width: 86px; } .c-e { width: 156px; } .c-f { width: 131px; } .c-g { width: 180px; } .c-n { width: 64px; } .c-t { width: 30px; border-right: 0; }
.sheet-body { height: 768px; display: flex; overflow: hidden; }
.row-heads { width: 25px; flex: none; background: #e6e6e6; border-right: 1px solid #9f9f9f; }
.row-heads div { height: 20px; line-height: 19px; text-align: center; font-size: 12px; border-bottom: 1px solid #b5b5b5; color: #444; padding-left: 2px; }
.col { flex: none; height: 768px; border-right: 1px solid #d4d4d4; background: repeating-linear-gradient(to bottom, transparent 0 19px, #d4d4d4 19px 20px); }
.cell { height: 20px; line-height: 19px; padding: 0 3px; font-family: "Lato", "Liberation Sans", sans-serif; font-size: 13.8px; color: #000; letter-spacing: 0; white-space: nowrap; position: relative; }
.cell.num { text-align: right; padding-right: 3px; }
.cell-head { background: #d9e1f2; font-weight: bold; border-bottom: 1px solid #8ea9db; }
.filter-btn { position: absolute; right: 1px; top: 2px; width: 17px; height: 16px; border: 1px solid #a0a0a0; background: #e6e6e6; display: flex; align-items: center; justify-content: center; }
.cell-head-b { padding: 0 2px; }

/* chart overlay */
.chart { position: absolute; left: 349px; top: 81px; width: 1175px; height: 590px; border: 2px solid #8c8c8c; background: repeating-linear-gradient(45deg, #f0f0f0 0 1px, #fff 1px 3.5px); }
.pie { position: absolute; left: 259px; top: 183px; }
.chart-btn { position: absolute; background: linear-gradient(#dcdcdc, #c6c6c6); color: #333; font-size: 11px; display: flex; align-items: center; justify-content: center; gap: 5px; height: 16px; }
.chart-btn-value { left: 9px; top: 7px; width: 69px; }
.chart-btn-axis { left: 9px; top: 561px; width: 63px; height: 17px; }
.legend { position: absolute; left: 1076px; top: 200px; width: 89px; height: 226px; background: #fcfcfc; padding: 1px 0 0 6px; }
.legend li { height: 22.4px; display: flex; align-items: center; font-size: 11px; color: #555; gap: 3px; }
.sw { width: 7px; height: 7px; flex: none; }
.sw1 { background: #4472c4; } .sw2 { background: #ed7d31; } .sw3 { background: #a5a5a5; } .sw4 { background: #ffc000; } .sw5 { background: #5b9bd5; } .sw6 { background: #70ad47; } .sw7 { background: #264478; } .sw8 { background: #9e480e; } .sw9 { background: #636363; } .sw10 { background: #997300; }
.handle { position: absolute; width: 11px; height: 11px; border-radius: 50%; background: #fff; border: 2px solid #8a8a8a; }
.h-tl { left: -7px; top: -7px; } .h-tr { right: -7px; top: -7px; } .h-ml { left: -7px; top: 287px; } .h-mr { right: -7px; top: 287px; } .h-bl { left: -7px; bottom: -7px; } .h-bm { left: 580px; bottom: -7px; } .h-br { right: -7px; bottom: -7px; }
.chart-tool { position: absolute; left: 1537px; width: 28px; height: 28px; background: #fff; border: 1px solid #a6a6a6; display: flex; align-items: center; justify-content: center; }
.chart-tool-plus { top: 80px; } .chart-tool-brush { top: 118px; }

/* scrollbars */
.vscroll { width: 15px; margin-left: 2px; display: flex; flex-direction: column; background: #e6e6e6; margin-top: 2px; }
.sb-btn { height: 15px; flex: none; background: #fff; border: 1px solid #a6a6a6; display: flex; align-items: center; justify-content: center; }
.sb-thumb { height: 735px; background: #fff; border: 1px solid #a6a6a6; border-top: 0; }
.sb-track { flex: 1; background: #dcdcdc; }

/* sheet tabs */
.sheet-tabs { height: 28px; flex: none; display: flex; background: #e6e6e6; border-top: 1px solid #9f9f9f; margin-right: 0; }
.sheet-nav { width: 100px; display: flex; align-items: center; padding-left: 24px; padding-bottom: 2px; }
.stab { height: 24px; display: flex; align-items: center; justify-content: center; font-size: 12.5px; color: #555; letter-spacing: 0; }
.stab-active { width: 82px; background: #f2f2f2; border: 1px solid #9f9f9f; border-top: 0; border-bottom: 2px solid #217346; color: #217346; font-weight: bold; margin-top: -1px; height: 25px; }
.stab-prod { width: 80px; border-right: 1px solid #a6a6a6; margin-top: 3px; height: 20px; }
.stab-tab { width: 143px; border-right: 1px solid #a6a6a6; margin-top: 3px; height: 20px; }
.stab-add { margin: 5px 0 0 34px; }
.tabs-fill { flex: 1; position: relative; }
.tabs-grip { position: absolute; right: 19px; top: 9px; width: 2px; height: 10px; background: repeating-linear-gradient(to bottom, #aaa 0 2px, transparent 2px 4px); }
.hscroll { width: 627px; height: 15px; margin: 6px 21px 0 0; display: flex; }
.hsb-btn { width: 14px; height: 15px; background: #fff; border: 1px solid #a6a6a6; display: flex; align-items: center; justify-content: center; }
.hsb-thumb { width: 566px; background: #fff; border: 1px solid #a6a6a6; border-width: 1px 2px 1px 2px; }
.hsb-track { flex: 1; background: #dcdcdc; margin-right: 2px; }

/* pane */
.pane { width: 260px; border-left: 1px solid #c6c6c6; background: #e6e6e6; padding-left: 12px; color: #444; font-size: 11.5px; }
.pane-head { height: 48px; display: flex; align-items: flex-start; padding-top: 12px; }
.pane-title { width: 167px; font-size: 20.5px; font-weight: 300; color: #217346; line-height: 28px; white-space: nowrap; letter-spacing: -.2px; }
.pane-menu { margin: 12px 0 0 15px; border: 4px solid transparent; border-top: 5px solid #777; border-bottom: 0; }
.pane-close { margin: 10px 0 0 32px; }
.pane-desc { display: flex; height: 42px; justify-content: space-between; width: 234px; }
.pane-desc p { line-height: 15px; white-space: nowrap; }
.gear-box { width: 44px; height: 27px; background: #e6e6e6; border: 1px solid #a6a6a6; display: flex; align-items: center; justify-content: center; gap: 6px; }
.pane-search { width: 234px; height: 19px; background: #fff; border: 1px solid #a6a6a6; margin-left: -1px; display: flex; align-items: center; justify-content: space-between; padding: 0 1px 0 2px; color: #666; }
.field-list { width: 234px; height: 282px; background: #fff; margin: 16px 0 0 -1px; }
.field-list li { height: 19px; display: flex; align-items: center; gap: 6px; padding-left: 2px; color: #444; }
.field-list li.on { font-weight: bold; }
.chk { width: 13px; height: 13px; background: #fff; border: 1px solid #777; flex: none; display: flex; align-items: center; justify-content: center; }
.pane-dots { width: 234px; margin-top: 16px; border-top: 1px dotted #aaa; }
.pane-drag { margin: 5px 0 0 3px; line-height: 15px; white-space: nowrap; }
.areas { display: grid; grid-template-columns: 115px 117px; grid-template-rows: 152px 150px; margin: 16px 0 0 2px; }
.area-tl, .area-bl { border-right: 1px solid #c6c6c6; }
.area-tl, .area-tr { border-bottom: 1px solid #c6c6c6; }
.area-head { display: flex; align-items: center; gap: 8px; height: 20px; padding-left: 3px; white-space: nowrap; }
.area-box { width: 109px; height: 125px; background: #fff; }
.area-tr .area-box, .area-br .area-box { width: 114px; margin-left: 2px; }
.area-tr .area-head, .area-br .area-head { padding-left: 6px; }
.area-bl .area-head, .area-br .area-head { height: 26px; padding-top: 4px; }
.area-bl .area-box, .area-br .area-box { height: 124px; padding: 2px 1px; }
.field-pill { height: 19px; border: 1px solid #a6a6a6; background: #fff; display: flex; align-items: center; justify-content: space-between; padding: 0 8px 0 6px; color: #444; }
.pane-foot { display: flex; align-items: center; gap: 6px; margin: 21px 0 0 2px; height: 21px; }
.pane-foot span { width: 158px; white-space: nowrap; }
.update-btn { width: 55px; height: 21px; line-height: 21px; text-align: center; background: #f2f2f2; color: #b0b0b0; }

/* status */
.status { height: 19px; flex: none; background: #f2f2f2; border-top: 1px solid #c6c6c6; display: flex; align-items: center; font-size: 11.5px; color: #444; position: relative; }
.status-ready { margin-left: 7px; }
.status-views { display: flex; margin-left: auto; height: 18px; align-items: stretch; }
.view-btn { width: 38px; display: flex; align-items: center; justify-content: center; }
.view-on { background: #c6c6c6; }
.zoom { display: flex; align-items: center; width: 170px; padding-left: 12px; }
.z-sign { width: 10px; text-align: center; font-weight: bold; color: #555; font-size: 13px; }
.z-track { width: 99px; height: 1px; background: #999; margin: 0 2px; position: relative; }
.z-track i { position: absolute; left: 46px; top: -7px; width: 5px; height: 14px; background: #666; }
.z-val { margin-left: 10px; }

/* dialog */
.dialog { position: absolute; left: 643px; top: 217px; width: 633px; height: 600px; background: #efefef; border: 1px solid #707070; box-shadow: 0 2px 16px rgba(0,0,0,.4); display: flex; flex-direction: column; color: #444; }
.dlg-title { height: 30px; background: #fff; display: flex; align-items: center; padding-left: 8px; color: #222; font-size: 12px; position: relative; flex: none; }
.dlg-help { position: absolute; left: 566px; top: 6px; font-weight: normal; font-size: 13px; }
.dlg-x { position: absolute; left: 606px; top: 9px; }
.dlg-tabs { height: 28px; padding: 7px 0 0 6px; flex: none; position: relative; z-index: 1; }
.dlg-tab { width: 107px; height: 22px; background: #fff; border: 1px solid #d0d0d0; border-bottom: 0; text-align: center; line-height: 20px; font-size: 11.5px; color: #333; letter-spacing: 0; }
.dlg-panel { margin: -1px 8px 0 6px; width: 617px; height: 506px; background: #fff; border: 1px solid #d4d4d4; display: flex; flex: none; }
.types { width: 173px; height: 477px; margin-top: 15px; border-right: 1px solid #c6c6c6; padding-left: 12px; flex: none; }
.types li { width: 149px; height: 24px; display: flex; align-items: center; gap: 10px; padding-left: 3px; color: #666; font-size: 11.5px; white-space: nowrap; }
.t-first { margin-top: -2px; }
.types li.t-sel { background: #c6c6c6; outline: 1px dotted #222; outline-offset: -1px; color: #333; }
.dlg-main { margin-left: 11px; width: 420px; }
.subtypes { display: flex; margin-top: 13px; }
.sub { width: 56px; height: 56px; }
.sub-sel { background: #c6c6c6; }
.sub-rule { width: 418px; height: 1px; background: #c8c8c8; margin: 5px 0 0 2px; }
.sub-name { margin: 8px 0 0 2px; height: 24px; line-height: 20px; font-size: 15px; color: #222; letter-spacing: -.2px; }
.preview { width: 225px; height: 138px; margin-top: 0; border: 4px solid #c6c6c6; background: #fff; padding-top: 10px; }
.preview-svg { background: repeating-linear-gradient(45deg, #ececec 0 1px, #fff 1px 3.5px); }
.pv-title { font: bold 3.6px "Open Sans", sans-serif; fill: #777; letter-spacing: 0; }
.pv-label text, text.pv-label { font: 2.6px "Open Sans", sans-serif; fill: #888; letter-spacing: 0; }
.dlg-foot { flex: 1; display: flex; justify-content: flex-end; align-items: flex-start; gap: 11px; padding: 5px 6px 0 0; position: relative; }
.dlg-btn { width: 73px; height: 21px; line-height: 18px; text-align: center; background: #e1e1e1; border: 1px solid #adadad; color: #222; font-size: 11.5px; }
.dlg-ok { border: 2px solid #0078d7; line-height: 17px; }
.dlg-grip { position: absolute; right: 1px; bottom: 1px; }
```
